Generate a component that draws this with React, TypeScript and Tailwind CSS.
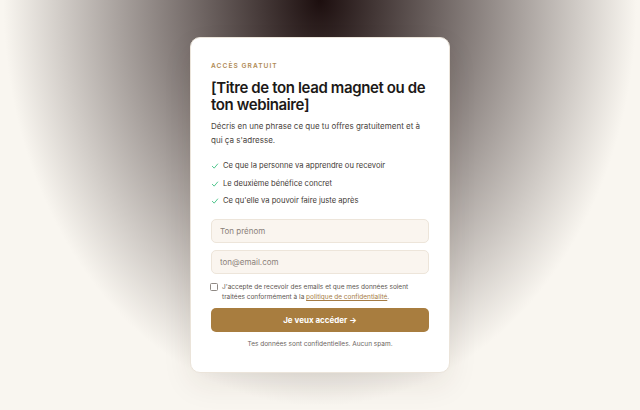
import { useState } from "react";

const benefits = [
  "Ce que la personne va apprendre ou recevoir",
  "Le deuxième bénéfice concret",
  "Ce qu'elle va pouvoir faire juste après",
];

function Check() {
  return (
    <svg viewBox="0 0 12 12" className="h-[8px] w-[8px] shrink-0" fill="none">
      <path d="M2 6.5 4.8 9.2 10 3" stroke="#44c284" strokeWidth="1.4" strokeLinecap="round" strokeLinejoin="round" />
    </svg>
  );
}

export default function App() {
  const [name, setName] = useState("");
  const [email, setEmail] = useState("");
  const [agree, setAgree] = useState(false);

  return (
    <div className="flex min-h-[410px] w-full items-center justify-center bg-[#f9f6f0] bg-[radial-gradient(ellipse_at_top,#1c0e0e_0%,#f9f6f0_70%)] font-['Inter',sans-serif]">
      <div className="w-[260px] rounded-[10px] border border-[#ebe4da] bg-white px-[20px] pb-[23px] pt-[24px] shadow-[0_12px_30px_rgba(60,40,20,0.08)]">
        <p className="text-[6.6px] font-semibold uppercase leading-[9px] tracking-[0.16em] text-[#b08a55]">Accès gratuit</p>
        <h1 className="mt-[8px] text-[15px] font-semibold leading-[17px] tracking-[-0.025em] text-[#1c1917]">
          [Titre de ton lead magnet ou de ton webinaire]
        </h1>
        <p className="mt-[6px] text-[8px] leading-[14px] text-[#4a4440]">
          Décris en une phrase ce que tu offres gratuitement et à qui ça s'adresse.
        </p>

        <ul className="mt-[13px] flex flex-col gap-[5.5px]">
          {benefits.map((b) => (
            <li key={b} className="flex h-[12px] items-center gap-[4px] text-[7.6px] text-[#3f3a36]">
              <Check />
              <span>{b}</span>
            </li>
          ))}
        </ul>

        <form className="mt-[12px] flex flex-col" onSubmit={(e) => e.preventDefault()}>
          <input
            value={name}
            onChange={(e) => setName(e.target.value)}
            placeholder="Ton prénom"
            className="h-[24px] rounded-[5px] border border-[#ede5da] bg-[#faf5ef] px-[8px] text-[8px] text-[#3f3a36] outline-none placeholder:text-[#8a817a]"
          />
          <input
            value={email}
            onChange={(e) => setEmail(e.target.value)}
            placeholder="ton@email.com"
            className="mt-[7px] h-[24px] rounded-[5px] border border-[#ede5da] bg-[#faf5ef] px-[8px] text-[8px] text-[#3f3a36] outline-none placeholder:text-[#8a817a]"
          />

          <label className="mt-[8px] flex items-start gap-[4px] text-[6.5px] leading-[10px] text-[#5c554f]">
            <input
              type="checkbox"
              checked={agree}
              onChange={(e) => setAgree(e.target.checked)}
              className="-ml-[1px] mt-[1px] h-[8px] w-[8px] shrink-0 appearance-none rounded-[1.5px] border border-[#8f8984] bg-white"
            />
            <span>
              J'accepte de recevoir des emails et que mes données soient traitées conformément à la{" "}
              <a href="#" className="text-[#a57c45] underline">
                politique de confidentialité
              </a>
              .
            </span>
          </label>

          <button
            type="submit"
            className="mt-[6px] h-[24px] rounded-[5px] bg-[#a87d3f] text-[8px] font-bold text-white"
          >
            Je veux accéder →
          </button>
        </form>

        <p className="mt-[7px] text-center text-[6.5px] leading-[10px] text-[#6b645e]">
          Tes données sont confidentielles. Aucun spam.
        </p>
      </div>
    </div>
  );
}
